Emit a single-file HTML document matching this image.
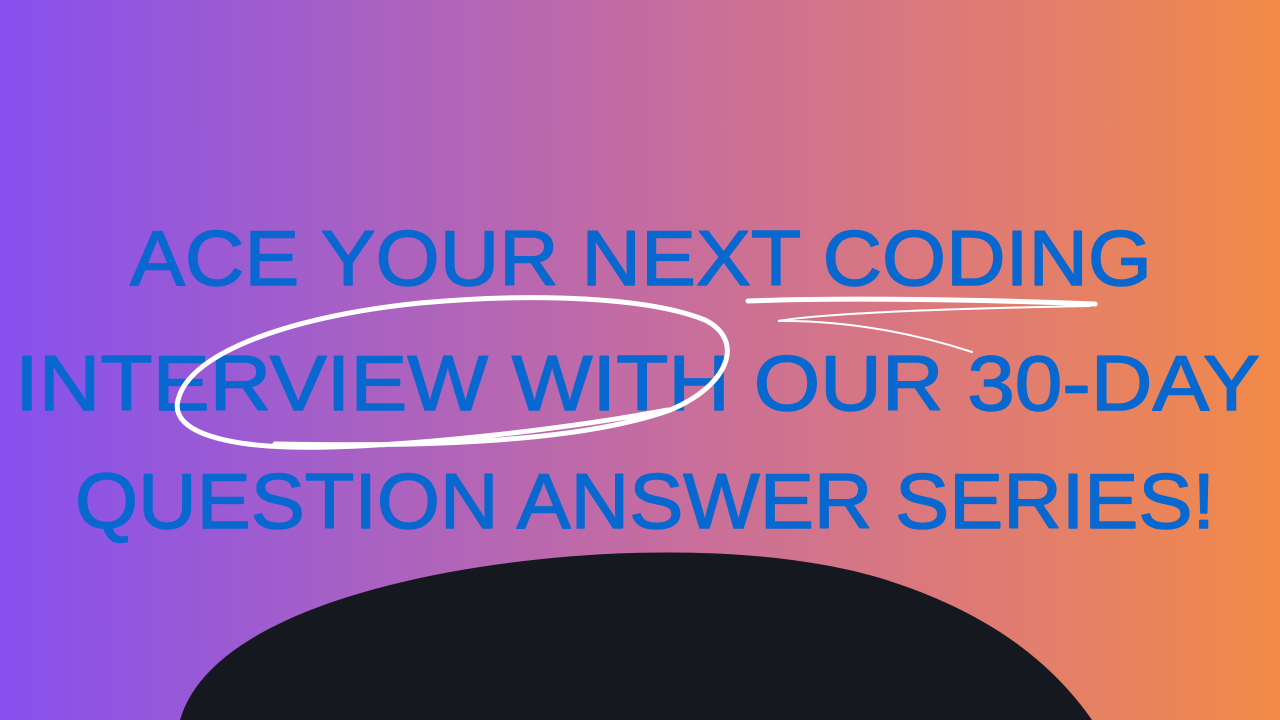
<!DOCTYPE html>
<html><head><meta charset="utf-8"><style>
html,body{margin:0;padding:0;width:1280px;height:720px;overflow:hidden}
body{background:linear-gradient(90deg,#8750ee 0%,#a45fc8 25%,#c46ca2 50%,#dd7a78 75%,#f28a48 100%)}
svg{position:absolute;left:0;top:0}
text{font-family:"Liberation Sans",sans-serif;font-size:78px;fill:#0868d0;stroke:#0868d0;stroke-width:1.5;stroke-linejoin:round}
</style></head><body>
<svg width="1280" height="720" viewBox="0 0 1280 720">
<path d="M180,720 C200,650 300,600 450,572 C600,545 770,545 880,578 C985,610 1050,660 1092,720 Z" fill="#15181e"/>
<text x="130" y="285" textLength="1022" lengthAdjust="spacingAndGlyphs">ACE YOUR NEXT CODING</text>
<text x="15" y="410" textLength="1245" lengthAdjust="spacingAndGlyphs">INTERVIEW WITH OUR 30-DAY</text>
<text x="75" y="528" textLength="1140" lengthAdjust="spacingAndGlyphs">QUESTION ANSWER SERIES!</text>
<g fill="none" stroke="#fff" stroke-linecap="round">
<path d="M748,301 C850,297 990,300 1095,304" stroke-width="5"/>
<path d="M1090,306 C980,308 830,312 778,321 C850,320 920,335 972,352" stroke-width="2"/>
<path d="M668,410 C560,430 420,445 330,447 C220,450 170,430 178,400 C190,350 300,315 420,303 C540,292 650,298 705,320 C745,340 730,385 670,410 C600,435 480,448 275,444" stroke-width="5"/>
</g>
</svg>
</body></html>
